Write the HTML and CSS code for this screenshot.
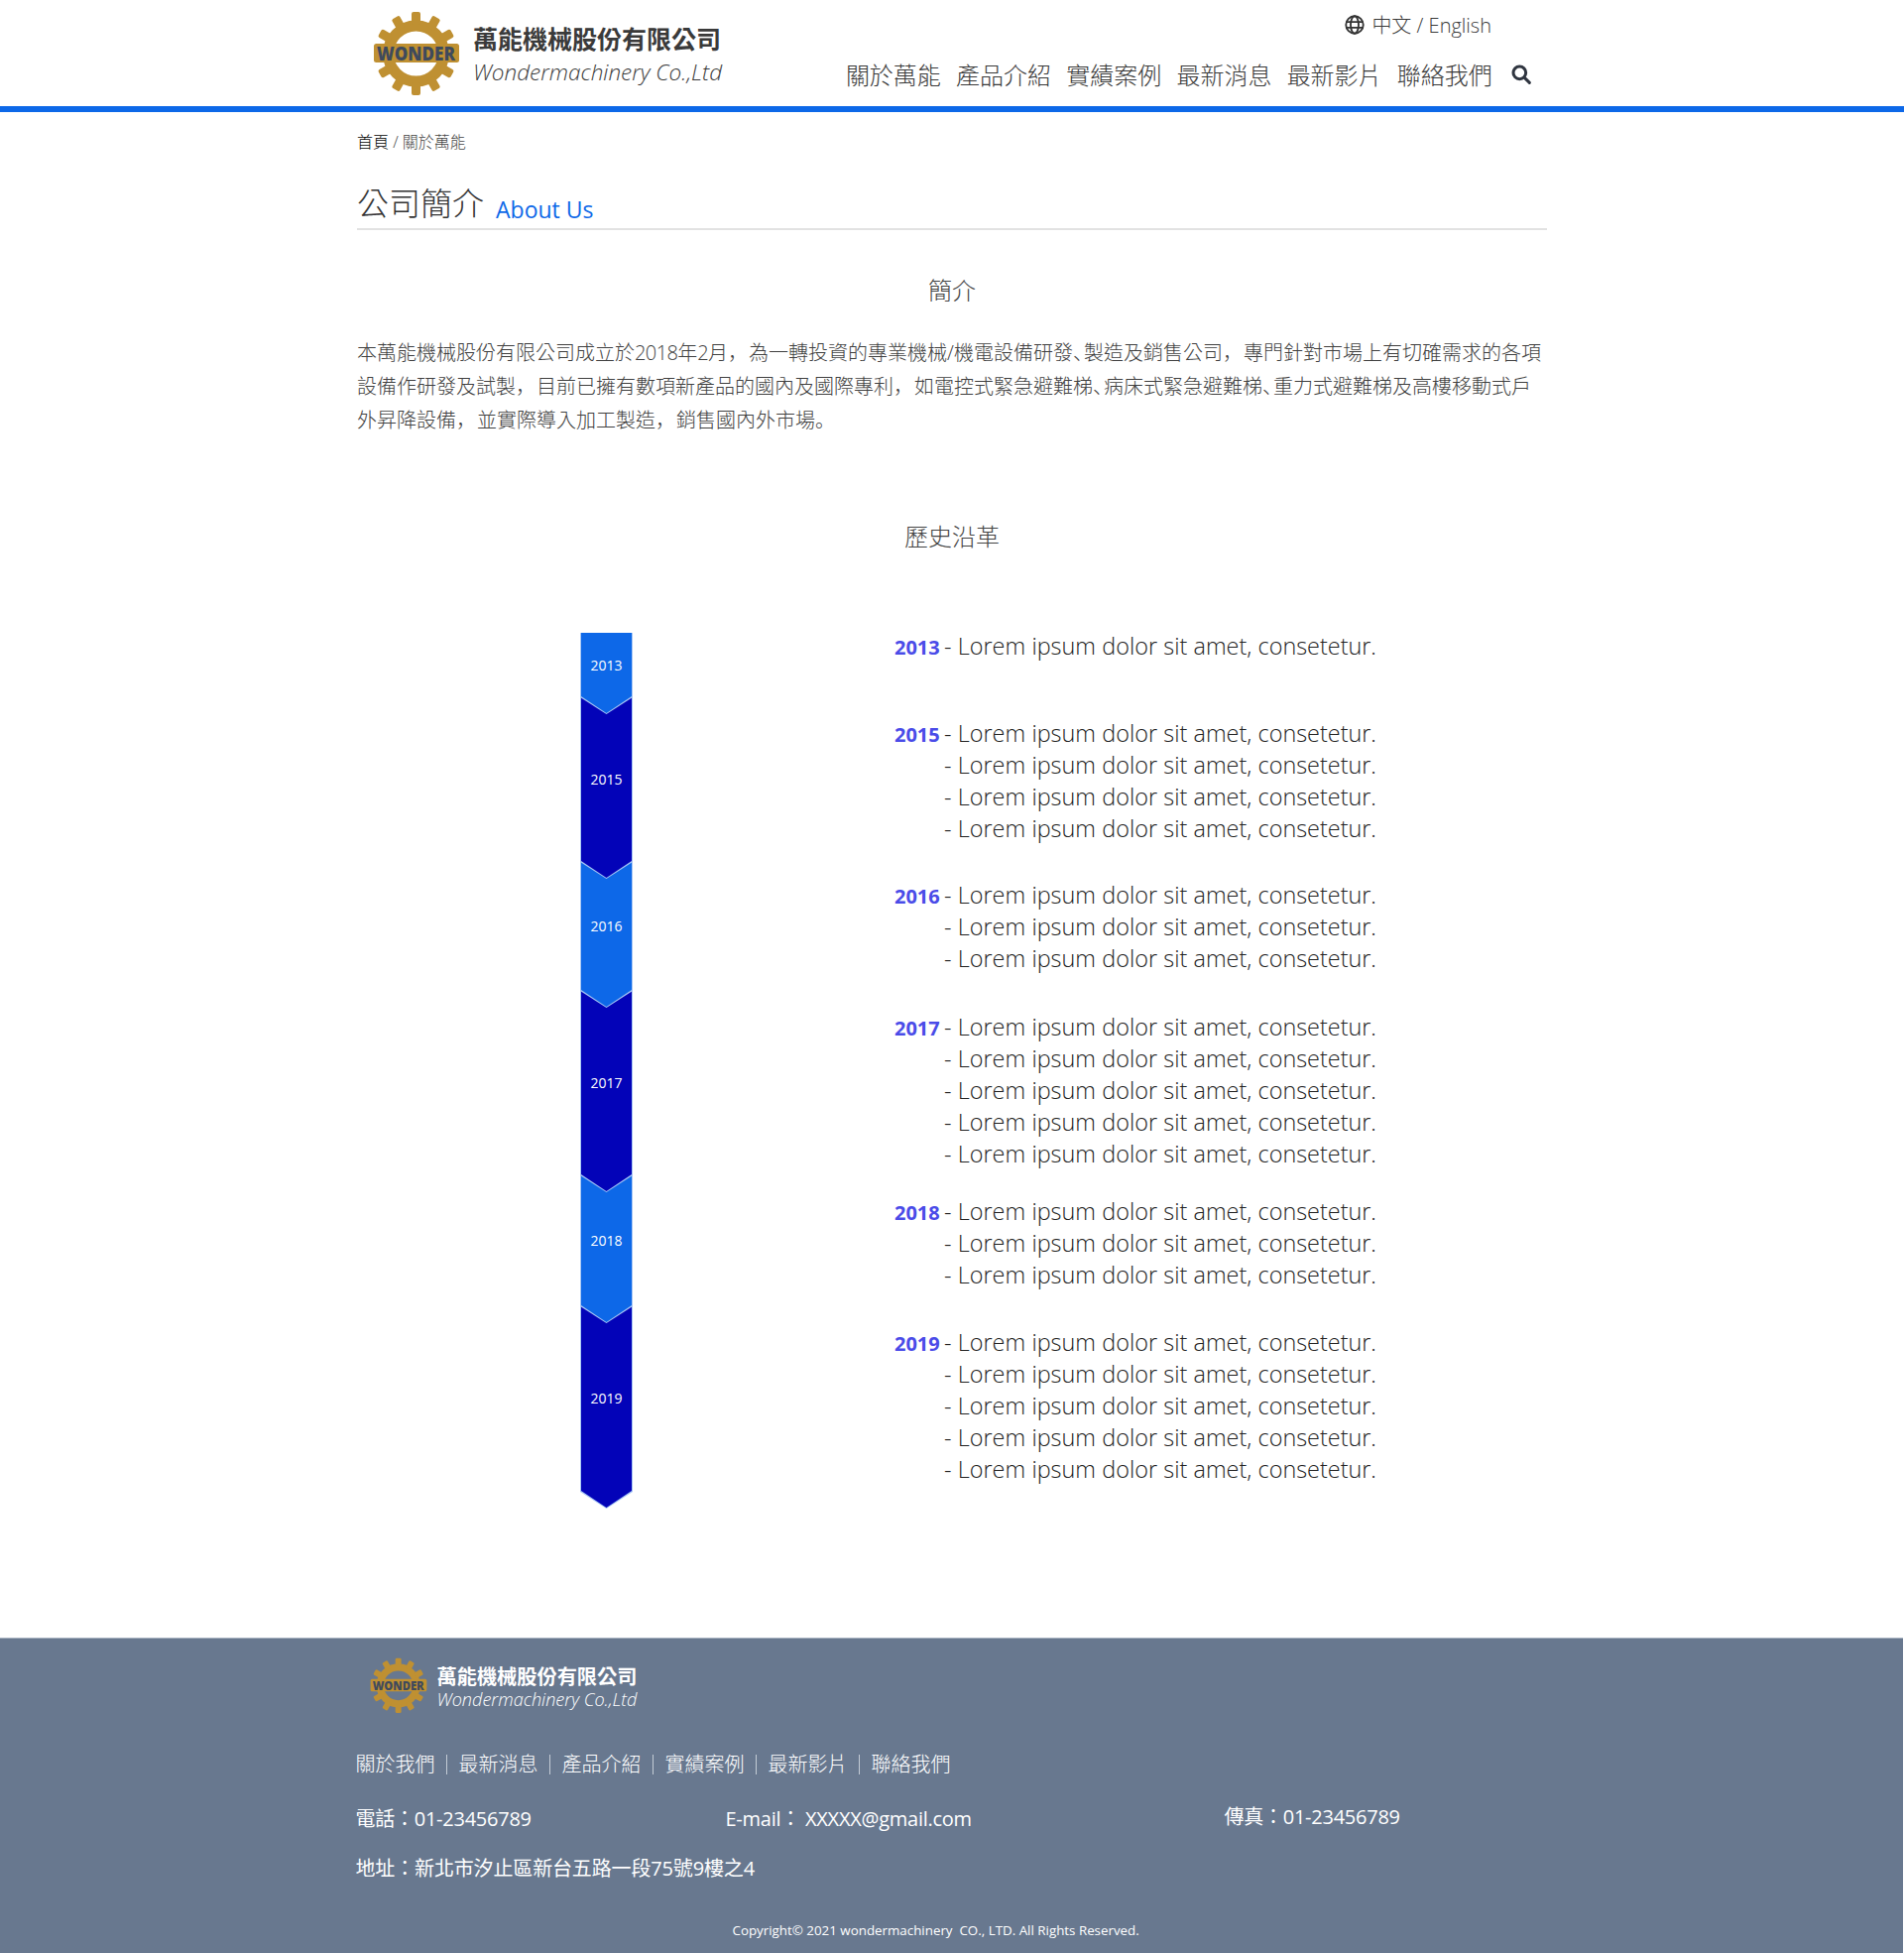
FILE: index.html
```html
<!DOCTYPE html>
<html lang="zh-Hant">
<head>
<meta charset="utf-8">
<title>公司簡介</title>
<link rel="stylesheet" href="styles.css">
</head>
<body>
<svg class="defs" width="0" height="0" aria-hidden="true">
  <defs>
    <rect id="tooth" x="39" y="1" width="9" height="13" rx="2"/>
    <g id="gear">
      <g class="gear-gold">
        <circle cx="43.500" cy="43" r="28" fill="none" stroke="#bf9032" stroke-width="11"/>
        <use href="#tooth" transform="rotate(0 43.500 43)"/>
        <use href="#tooth" transform="rotate(30 43.500 43)"/>
        <use href="#tooth" transform="rotate(60 43.500 43)"/>
        <use href="#tooth" transform="rotate(120 43.500 43)"/>
        <use href="#tooth" transform="rotate(150 43.500 43)"/>
        <use href="#tooth" transform="rotate(180 43.500 43)"/>
        <use href="#tooth" transform="rotate(210 43.500 43)"/>
        <use href="#tooth" transform="rotate(240 43.500 43)"/>
        <use href="#tooth" transform="rotate(300 43.500 43)"/>
        <use href="#tooth" transform="rotate(330 43.500 43)"/>
        <rect x="1" y="33" width="86" height="19" rx="2.500"/>
      </g>
      <text x="43.500" y="49.500" text-anchor="middle" class="gear-text" textLength="79" lengthAdjust="spacingAndGlyphs">WONDER</text>
    </g>
  </defs>
</svg>

<header class="site-header">
  <div class="wrap header-inner">
    <a class="brand" href="#">
      <svg class="brand-mark" viewBox="0 0 88 88"><use href="#gear"/></svg>
      <span class="brand-text">
        <strong class="brand-zh">萬能機械股份有限公司</strong>
        <em class="brand-en">Wondermachinery Co.,Ltd</em>
      </span>
    </a>
    <div class="header-right">
      <div class="lang">
        <svg class="globe" viewBox="0 0 24 24" fill="none" stroke="#333" stroke-width="2.200"><circle cx="12" cy="12" r="10.500"/><ellipse cx="12" cy="12" rx="4.800" ry="10.500"/><path d="M2 8.500h20M2 15.500h20"/></svg>
        <span>中文 / English</span>
      </div>
      <nav class="main-nav">
        <a href="#">關於萬能</a>
        <a href="#">產品介紹</a>
        <a href="#">實績案例</a>
        <a href="#">最新消息</a>
        <a href="#">最新影片</a>
        <a href="#">聯絡我們</a>
        <svg class="search" viewBox="0 0 24 24" fill="none" stroke="#2f3540" stroke-width="3.600" stroke-linecap="round"><circle cx="10" cy="10" r="7.600"/><path d="M16 16l6 6"/></svg>
      </nav>
    </div>
  </div>
</header>

<main class="wrap">
  <div class="crumb"><a href="#">首頁</a> / <span>關於萬能</span></div>
  <h1 class="page-title">公司簡介<span>About Us</span></h1>

  <h2 class="sec-title intro-title">簡介</h2>
  <div class="intro">
    <p>本萬能機械股份有限公司成立於<span class="n">2018</span>年<span class="n">2</span>月<span class="cm" lang="zh-Hans">，</span>為一轉投資的專業機械/機電設備研發<span class="dun" lang="zh-Hans">、</span>製造及銷售公司<span class="cm" lang="zh-Hans">，</span>專門針對市場上有切確需求的各項</p>
    <p>設備作研發及試製<span class="cm" lang="zh-Hans">，</span>目前已擁有數項新產品的國內及國際專利<span class="cm" lang="zh-Hans">，</span>如電控式緊急避難梯<span class="dun" lang="zh-Hans">、</span>病床式緊急避難梯<span class="dun" lang="zh-Hans">、</span>重力式避難梯及高樓移動式戶</p>
    <p>外昇降設備<span class="cm" lang="zh-Hans">，</span>並實際導入加工製造<span class="cm" lang="zh-Hans">，</span>銷售國內外市場<span class="cm" lang="zh-Hans">。</span></p>
  </div>

  <h2 class="sec-title history-title">歷史沿革</h2>

  <section class="timeline">
    <div class="ribbon">
      <div class="seg seg-2013 light"><span>2013</span></div>
      <div class="seg seg-2015 dark"><span>2015</span></div>
      <div class="seg seg-2016 light"><span>2016</span></div>
      <div class="seg seg-2017 dark"><span>2017</span></div>
      <div class="seg seg-2018 light"><span>2018</span></div>
      <div class="seg seg-2019 dark"><span>2019</span></div>
    </div>
    <div class="events">
      <div class="event ev-2013"><b>2013</b><ul><li>- Lorem ipsum dolor sit amet, consetetur.</li></ul></div>
      <div class="event ev-2015"><b>2015</b><ul><li>- Lorem ipsum dolor sit amet, consetetur.</li><li>- Lorem ipsum dolor sit amet, consetetur.</li><li>- Lorem ipsum dolor sit amet, consetetur.</li><li>- Lorem ipsum dolor sit amet, consetetur.</li></ul></div>
      <div class="event ev-2016"><b>2016</b><ul><li>- Lorem ipsum dolor sit amet, consetetur.</li><li>- Lorem ipsum dolor sit amet, consetetur.</li><li>- Lorem ipsum dolor sit amet, consetetur.</li></ul></div>
      <div class="event ev-2017"><b>2017</b><ul><li>- Lorem ipsum dolor sit amet, consetetur.</li><li>- Lorem ipsum dolor sit amet, consetetur.</li><li>- Lorem ipsum dolor sit amet, consetetur.</li><li>- Lorem ipsum dolor sit amet, consetetur.</li><li>- Lorem ipsum dolor sit amet, consetetur.</li></ul></div>
      <div class="event ev-2018"><b>2018</b><ul><li>- Lorem ipsum dolor sit amet, consetetur.</li><li>- Lorem ipsum dolor sit amet, consetetur.</li><li>- Lorem ipsum dolor sit amet, consetetur.</li></ul></div>
      <div class="event ev-2019"><b>2019</b><ul><li>- Lorem ipsum dolor sit amet, consetetur.</li><li>- Lorem ipsum dolor sit amet, consetetur.</li><li>- Lorem ipsum dolor sit amet, consetetur.</li><li>- Lorem ipsum dolor sit amet, consetetur.</li><li>- Lorem ipsum dolor sit amet, consetetur.</li></ul></div>
    </div>
  </section>
</main>

<footer class="site-footer">
  <div class="wrap">
    <a class="foot-brand" href="#">
      <svg class="foot-mark" viewBox="0 0 88 88"><use href="#gear"/></svg>
      <span class="foot-brand-text">
        <strong>萬能機械股份有限公司</strong>
        <em>Wondermachinery Co.,Ltd</em>
      </span>
    </a>
    <nav class="foot-nav">
      <a href="#">關於我們</a>
      <a href="#">最新消息</a>
      <a href="#">產品介紹</a>
      <a href="#">實績案例</a>
      <a href="#">最新影片</a>
      <a href="#">聯絡我們</a>
    </nav>
    <div class="contact">
      <span class="c-tel">電話：01-23456789</span>
      <span class="c-mail">E-mail： XXXXX@gmail.com</span>
      <span class="c-fax">傳真：01-23456789</span>
    </div>
    <div class="address">地址：新北市汐止區新台五路一段75號9樓之4</div>
    <div class="copyright">Copyright© 2021 wondermachinery&nbsp; CO., LTD. All Rights Reserved.</div>
  </div>
</footer>
</body>
</html>
```

FILE: styles.css
```css
* { box-sizing: border-box; }
html, body { margin: 0; padding: 0; }
body {
  font-family: "Open Sans", "Noto Sans CJK TC", sans-serif;
  font-weight: 300;
  color: #333;
  background: #fff;
}
a { color: inherit; text-decoration: none; }
.defs { position: absolute; }
#tooth, .gear-gold { fill: #bf9032; }
.gear-text { font: 800 19px "Open Sans", sans-serif; fill: #3f4a5c; }
.wrap { width: 1200px; margin: 0 auto; }

/* header */
.site-header { height: 113px; border-bottom: 6px solid #0d68e8; }
.header-inner { display: flex; justify-content: space-between; height: 107px; }
.brand { display: flex; align-items: flex-start; margin-left: 16px; padding-top: 11px; }
.brand-mark { width: 88px; height: 88px; flex: none; }
.brand-text { display: flex; flex-direction: column; margin-left: 13px; padding-top: 10px; }
.brand-zh { font-size: 25px; line-height: 36px; font-weight: 700; color: #3a3a3a; }
.brand-en { font-size: 22.500px; line-height: 32px; font-weight: 300; color: #3a3a3a; }
.header-right { display: flex; flex-direction: column; align-items: flex-end; padding-right: 16px; }
.lang { display: flex; align-items: center; gap: 7px; height: 25px; margin: 12px 40px 0 0; font-size: 20px; color: #3a3a3a; }
.globe { width: 20px; height: 20px; }
.main-nav { display: flex; align-items: center; gap: 15.200px; margin-top: 21px; font-size: 24px; line-height: 36px; color: #3a3a3a; white-space: nowrap; }
.search { width: 20px; height: 20px; margin: -2px 0 0 4px; flex: none; }

/* intro */
.crumb { margin-top: 21px; font-size: 16px; line-height: 18px; color: #444; }
.crumb a { color: #000; }
.page-title { display: flex; align-items: baseline; margin: 32px 0 0; height: 48px; padding-bottom: 2px; border-bottom: 2px solid #e2e2e2; font-size: 32px; line-height: 42px; font-weight: 300; color: #333; }
.page-title span { margin-left: 12px; font-size: 23px; font-weight: 400; color: #0d68e8; transform: translateY(3px); }
.sec-title { margin: 0; font-size: 24px; line-height: 36px; font-weight: 300; color: #444; text-align: center; }
.intro-title { margin-top: 43px; }
.intro { margin: 28px 0 0; font-size: 20px; line-height: 34px; color: #404040; }
.intro p { margin: 0; height: 34px; white-space: nowrap; }
.intro .n { letter-spacing: -0.6px; }
.intro .cm, .intro .dun { font-family: "Noto Sans CJK SC", sans-serif; line-height: 0; }
.intro .cm { margin-right: 1px; }
.intro .dun { letter-spacing: -9px; }
.history-title { margin-top: 82px; }

/* timeline */
.timeline { display: flex; margin-top: 79px; height: 1013px; }
.ribbon { display: flex; flex-direction: column; width: 53px; margin-left: 225px; }
.seg {
  display: flex; align-items: center; justify-content: center;
  position: relative;
  margin-bottom: -17px;
  padding-bottom: 19px;
  background: #a9c8f5;
  clip-path: polygon(0 0, 100% 0, 100% calc(100% - 17px), 50% 100%, 0 calc(100% - 17px));
  font-size: 14px;
  font-weight: 400;
  color: #fff;
}
.seg::before {
  content: "";
  position: absolute;
  inset: 0 1px 1px;
  clip-path: polygon(0 0, 100% 0, 100% calc(100% - 17px), 50% 100%, 0 calc(100% - 17px));
}
.seg span { position: relative; }
.seg.light::before { background: #0d68e8; }
.seg.dark::before { background: #0303b8; }
.seg-2013 { height: 82px; z-index: 6; padding-bottom: 17px; }
.seg-2015 { height: 183px; z-index: 5; }
.seg-2016 { height: 147px; z-index: 4; }
.seg-2017 { height: 203px; z-index: 3; }
.seg-2018 { height: 149px; z-index: 2; }
.seg-2019 { height: 204px; z-index: 1; }

.events { margin-left: 264px; margin-top: -3px; font-size: 23.400px; line-height: 32px; color: #222; }
.event { display: flex; }
.event b { width: 50px; flex: none; margin-top: 2px; font-size: 20px; font-weight: 700; color: #4a4be8; }
.event ul { list-style: none; margin: 0; padding: 0; }
.event li { word-spacing: 0.2px; }
.ev-2015 { margin-top: 54px; }
.ev-2016 { margin-top: 35px; }
.ev-2017 { margin-top: 37px; }
.ev-2018 { margin-top: 26px; }
.ev-2019 { margin-top: 36px; }

/* footer */
.site-footer { height: 318px; background: #68788f; border-top: 1px solid #aab4c2; color: #fff; margin-right: 1px; }
.foot-brand { display: flex; align-items: flex-start; margin-left: 13px; padding-top: 19px; }
.foot-mark { width: 58px; height: 58px; flex: none; }
.foot-brand-text { display: flex; flex-direction: column; margin-left: 10px; padding-top: 6px; }
.foot-brand-text strong { font-size: 20.200px; line-height: 27px; font-weight: 700; }
.foot-brand-text em { font-size: 18.100px; line-height: 18px; font-weight: 300; }
.foot-nav { display: flex; margin: 36px 0 0 -1px; font-size: 20px; line-height: 28px; }
.foot-nav a { padding: 0 11.500px; border-left: 1px solid #c4ccd6; line-height: 20px; margin-top: 4px; }
.foot-nav a:first-child { padding-left: 0; border-left: 0; }
.contact { display: flex; margin: 30px 0 0 -1px; font-size: 20px; line-height: 30px; letter-spacing: -0.25px; }
.contact span { display: block; font-weight: 400; }
.c-tel { width: 373px; }
.c-mail { width: 503px; }
.c-fax { margin-top: -2px; }
.address { margin: 20px 0 0 -1px; font-size: 20px; line-height: 30px; font-weight: 400; letter-spacing: -0.15px; }
.copyright { margin-top: 37px; margin-left: 379px; font-size: 13.350px; line-height: 20px; font-weight: 400; }
```
